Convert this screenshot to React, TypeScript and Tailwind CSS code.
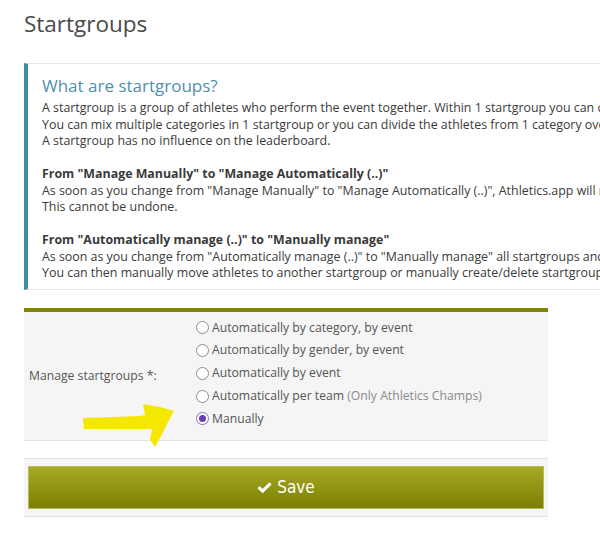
import { useState } from 'react';

const options = [
  { id: 'cat', label: 'Automatically by category, by event' },
  { id: 'gender', label: 'Automatically by gender, by event' },
  { id: 'event', label: 'Automatically by event' },
  { id: 'team', label: 'Automatically per team', note: '(Only Athletics Champs)' },
  { id: 'manual', label: 'Manually' },
];

function Radio({ checked }: { checked: boolean }) {
  return (
    <span
      className={`inline-flex items-center justify-center w-[13px] h-[13px] rounded-full border bg-white shrink-0 ${
        checked ? 'border-[#8a6fc4]' : 'border-[#8d8d8d]'
      }`}
    >
      {checked && <span className="w-[7px] h-[7px] rounded-full bg-[#6a3fb5]" />}
    </span>
  );
}

export default function App() {
  const [mode, setMode] = useState('manual');

  return (
    <div
      className="relative w-[600px] h-[536px] overflow-hidden bg-white text-[#444]"
      style={{ fontFamily: '"Open Sans", "DejaVu Sans", sans-serif' }}
    >
      <h1 className="pl-[24px] pt-[9px] text-[22.5px] leading-[30px] text-[#4a4a4a]">Startgroups</h1>

      {/* info callout, runs past the right edge like the original page */}
      <div className="ml-[24px] mt-[24px] w-[700px] border-l-4 border-l-[#3d8aab] border-y border-y-[#e6e6e6] pl-[14px] pt-[12px] pb-[7px]">
        <h3 className="text-[17px] leading-[20px] text-[#4f8fb0] mb-[4px]">What are startgroups?</h3>
        <div className="text-[12.4px] leading-[16.5px] text-[#3a3a3a] whitespace-nowrap">
          <p className="mb-[16.5px]">
            A startgroup is a group of athletes who perform the event together. Within 1 startgroup you can compete in different heats.
            <br />
            You can mix multiple categories in 1 startgroup or you can divide the athletes from 1 category over multiple startgroups.
            <br />
            A startgroup has no influence on the leaderboard.
          </p>
          <p className="mb-[16.5px]">
            <b>From "Manage Manually" to "Manage Automatically (..)"</b>
            <br />
            As soon as you change from "Manage Manually" to "Manage Automatically (..)", Athletics.app will recreate all startgroups.
            <br />
            This cannot be undone.
          </p>
          <p>
            <b>From "Automatically manage (..)" to "Manually manage"</b>
            <br />
            As soon as you change from "Automatically manage (..)" to "Manually manage" all startgroups and athletes stay as they are.
            <br />
            You can then manually move athletes to another startgroup or manually create/delete startgroups.
          </p>
        </div>
      </div>

      <div className="ml-[24px] mt-[18px] w-[524px] bg-[#f5f5f5] border-t-4 border-t-[#7f8300] border-b border-b-[#e4e4e4] flex items-center text-[12.2px] text-[#555]">
        <label className="w-[172px] pl-[5px]">Manage startgroups *:</label>
        <div className="pt-[5px] pb-[10px]">
          {options.map((o) => (
            <div
              key={o.id}
              className="h-[22.75px] flex items-center gap-[3px] cursor-pointer"
              onClick={() => setMode(o.id)}
            >
              <Radio checked={mode === o.id} />
              <span>
                {o.label}
                {o.note && <span className="text-[#8a8a8a]"> {o.note}</span>}
              </span>
            </div>
          ))}
        </div>
      </div>

      <div className="ml-[24px] mt-[17px] w-[524px] bg-[#f5f5f5] border-y border-y-[#e2e2e2] px-[4px] py-[7px]">
        <button className="w-full h-[43px] flex items-center justify-center gap-[5px] border border-[#b9bc5a] bg-gradient-to-b from-[#a5a922] to-[#7c8000] text-white text-[17px]">
          <svg width="15" height="13" viewBox="0 0 16 13" fill="white">
            <path d="M0.5 7.2 L2.8 4.9 L6 8.1 L13.2 0.9 L15.5 3.2 L6 12.7 Z" />
          </svg>
          <span style={{ fontFamily: '"DejaVu Sans Condensed", "Liberation Sans Narrow", sans-serif' }}>Save</span>
        </button>
      </div>

      {/* hand-drawn yellow arrow pointing at "Manually" */}
      <svg className="absolute left-0 top-0 pointer-events-none" width="600" height="536">
        <path
          d="M83 418 L140 416 L145 415 L143 404 L160 407 L174 411 L168 422 L161 436 L155 447 L150 440 L152 429 L120 429 L84 429 Z"
          fill="#f4e800"
        />
      </svg>
    </div>
  );
}
